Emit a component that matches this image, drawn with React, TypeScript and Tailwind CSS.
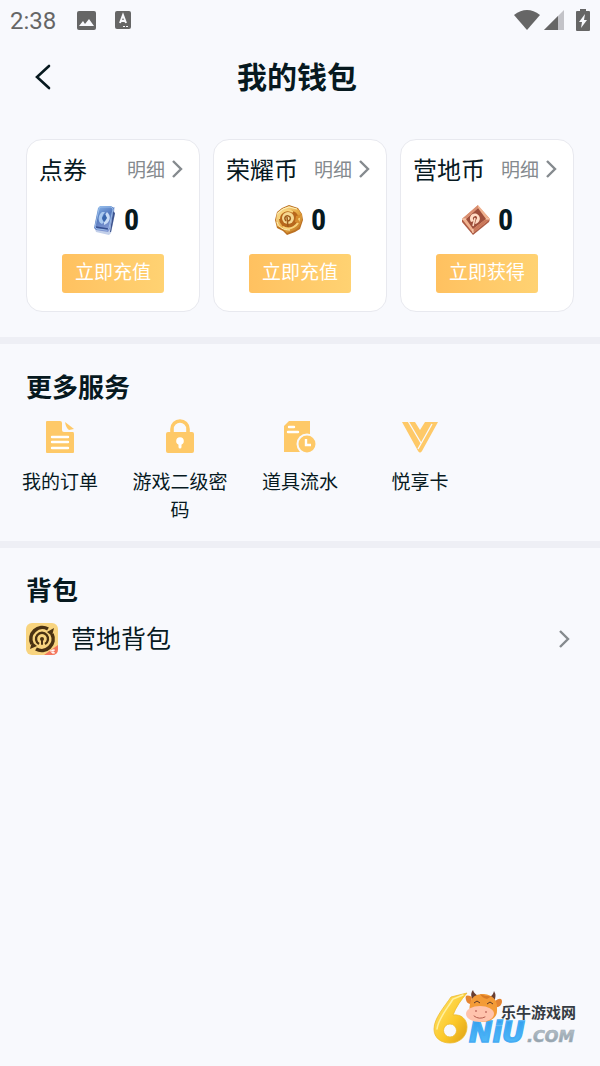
import type { ReactNode } from "react";

const TicketIcon = () => (
  <svg width="24" height="32" viewBox="0 0 24 32" aria-hidden="true">
    <defs>
      <linearGradient id="ticket" x1="0" y1="0" x2="0.4" y2="1">
        <stop offset="0" stopColor="#8fbdf0" />
        <stop offset="0.5" stopColor="#5478bd" />
        <stop offset="1" stopColor="#8399d3" />
      </linearGradient>
    </defs>
    <path d="M6 4 22 3 21 9 22 10 18 29 16 31 3 28 2 25Z" fill="#c3d0ea" />
    <path d="M18 28 22 9 20 7 17 28Z" fill="#3d538c" />
    <path d="M7 2 18 2 21 4 17 25 15 28 3 26 1 24 5 4Z" fill="url(#ticket)" />
    <path d="M7 3 18 3 20 5 16 24 14 26 4 25 2 23 6 5Z" fill="none" stroke="#a4c6ee" strokeWidth="0.8" />
    <path d="M9 8C5 11 4 18 9 20l2-2C8 15 9 12 12 8Z" fill="#a9c9ef" />
    <path d="M14 8c5 4 3 11-3 13v-3c3-2 3-5 1-7Z" fill="#c9dcf5" />
    <path d="M12 10 14 14 11 18 9 14Z" fill="#3866ad" />
    <path d="M3 23 15 25" stroke="#354f91" strokeWidth="1.5" />
  </svg>
);

const GoldCoinIcon = () => (
  <svg width="30" height="32" viewBox="0 0 30 32" aria-hidden="true">
    <defs>
      <linearGradient id="gold" x1="0" y1="0" x2="1" y2="1">
        <stop offset="0" stopColor="#fff0b5" />
        <stop offset="0.5" stopColor="#e8ad48" />
        <stop offset="1" stopColor="#bd721e" />
      </linearGradient>
    </defs>
    <path d="M15 1 24 4 28 10 29 16 26 25 21 28 13 31 9 27 3 24 1 16 3 8 8 4Z" fill="#bc7122" />
    <path d="M15 2 24 5 28 11 28 16 25 23 21 26 13 29 9 25 3 22 2 16 3 9 8 5Z" fill="url(#gold)" />
    <ellipse cx="15" cy="15" rx="10" ry="9" fill="#b7671c" />
    <path d="M5 15c0-7 8-11 14-7M25 14c0 8-9 13-16 9" fill="none" stroke="#f8d47b" strokeWidth="2" />
    <circle cx="14" cy="14" r="6" fill="#f5d891" />
    <path d="M12 17c-3-4 1-7 4-4 1 2 0 4-3 4" fill="none" stroke="#9d5b1b" strokeWidth="1.5" />
    <path d="M13 13 14 23" stroke="#9d5b1b" strokeWidth="1.5" />
    <path d="M3 18c2 6 7 8 13 8M4 9l5-4 6-2 8 2" fill="none" stroke="#fff0b8" />
    <path d="m22 12 6-2-4 5 3 5-6-2Z" fill="#d68c2e" />
  </svg>
);

const CampCoinIcon = () => (
  <svg width="30" height="32" viewBox="0 0 30 32" aria-hidden="true">
    <path d="M17 2 29 15 28 18 12 31 1 18 1 15Z" fill="#ad5c45" />
    <path d="M17 1 29 15 12 29 1 15Z" fill="#f0b28f" />
    <path d="M17 4 25 15 12 25 5 15Z" fill="#9e4f3b" />
    <path d="M17 1 17 4 5 15 1 15Z" fill="#d88e70" />
    <path d="M12 25 12 29 29 15 25 15Z" fill="#ca785a" />
    <path d="M10 18c-3-5 1-10 6-8 5 3 3 9-2 10l1-4c2-2 1-4-1-4-2 1-3 2-1 5Z" fill="#ffdcc4" />
    <path d="M14 14 12 22" stroke="#ffdcc4" strokeWidth="1.5" />
    <path d="M1 15 5 15M25 15 29 15M12 25v4" stroke="#fbd2b9" />
  </svg>
);

const OrderIcon = () => (
  <svg width="36" height="36" viewBox="0 0 36 36" aria-hidden="true">
    <path d="M4 3Q4 2 5 2H18Q20 2 20 4V11Q20 13 22 13H31Q32 13 32 15V33Q32 34 31 34H5Q4 34 4 33Z" fill="#fec968" />
    <path d="M23 3 32 10 27 11Q24 9 23 3Z" fill="#fec968" />
    <path d="M10 18H26M10 23H26M10 29H26" stroke="#fff" strokeWidth="2.4" strokeLinecap="round" />
  </svg>
);

const LockIcon = () => (
  <svg width="36" height="36" viewBox="0 0 36 36" aria-hidden="true">
    <path d="M10 15V10a8 8 0 0 1 16 0V15" fill="none" stroke="#fec968" strokeWidth="3.6" />
    <rect x="4" y="13" width="28" height="21" rx="2" fill="#fec968" />
    <circle cx="18" cy="22" r="3.8" fill="#fff" />
    <path d="M18 23V28" stroke="#fff" strokeWidth="3" strokeLinecap="round" />
  </svg>
);

const RecordIcon = () => (
  <svg width="36" height="36" viewBox="0 0 36 36" aria-hidden="true">
    <path d="M7 2H28V33H2V7Z" fill="#fec968" />
    <path d="M7 8H12M6 13H16" stroke="#fff" strokeWidth="2.4" strokeLinecap="round" />
    <circle cx="25" cy="25" r="9.500" fill="#fec968" stroke="#f8f9fd" strokeWidth="2" />
    <path d="M24 20V26H29" fill="none" stroke="#fff" strokeWidth="2.4" />
  </svg>
);

const CardIcon = () => (
  <svg width="38" height="36" viewBox="0 0 38 36" aria-hidden="true">
    <path d="M1 3H14L19 11 24 3H37L21 32Q19 35 17 32Z" fill="#fec968" />
    <path d="M7 2 20 24M31 5 17 30" fill="none" stroke="#f8f9fd" strokeWidth="1.300" />
  </svg>
);

const BagIcon = () => (
  <svg width="32" height="32" viewBox="0 0 32 32" aria-hidden="true">
    <rect width="32" height="32" rx="6" fill="#f8d47f" />
    <path d="M6 21A11.500 11.500 0 0 1 22 6M26 11A11.500 11.500 0 0 1 10 26" fill="none" stroke="#4a3213" strokeWidth="3.6" />
    <path d="M4 26 6 19 11 23ZM28 5 26 13 21 9Z" fill="#4a3213" />
    <path d="M13 21a6 6 0 1 1 6 0" fill="none" stroke="#4a3213" strokeWidth="2.4" />
    <circle cx="16" cy="16" r="2" fill="#4a3213" />
    <path d="M16 16V21" stroke="#4a3213" strokeWidth="2" strokeLinecap="round" />
    <path d="M18 32 32 22V26Q32 32 26 32Z" fill="#f4775f" />
    <path d="m24 28 5-1m-4 2 4 1m-2-4v5" stroke="#fff" />
  </svg>
);

const Chevron = ({ className }: { className: string }) => (
  <svg width="12" height="18" viewBox="0 0 12 18" className={className} aria-hidden="true">
    <path d="M2 1 10 9 2 17" fill="none" stroke="currentColor" strokeWidth="2.4" />
  </svg>
);

const wallets = [
  { name: "点券", icon: <TicketIcon />, amount: 0, action: "立即充值" },
  { name: "荣耀币", icon: <GoldCoinIcon />, amount: 0, action: "立即充值" },
  { name: "营地币", icon: <CampCoinIcon />, amount: 0, action: "立即获得" },
];

const services = [
  { name: "我的订单", icon: <OrderIcon /> },
  { name: "游戏二级密码", icon: <LockIcon /> },
  { name: "道具流水", icon: <RecordIcon /> },
  { name: "悦享卡", icon: <CardIcon /> },
];

function StatusBar() {
  return (
    <div className="flex h-10 items-center justify-between px-[10px] text-[#666]">
      <div className="flex items-center">
        <span className="w-[66px] pt-[2px] font-[Roboto,sans-serif] text-[24px] leading-8">2:38</span>
        <svg width="20" height="20" viewBox="0 0 20 20" aria-hidden="true">
          <rect x="1" y="1" width="19" height="19" rx="2" fill="currentColor" />
          <path d="M3 16 7 11 9 14 13 9 18 16Z" fill="#f8f9fd" />
        </svg>
        <svg width="16" height="18" viewBox="0 0 16 18" className="ml-[19px]" aria-hidden="true">
          <rect width="16" height="18" rx="2" fill="currentColor" />
          <path d="M5 12 8 4 11 12M6 10H10" fill="none" stroke="#f8f9fd" strokeWidth="2" />
          <path d="M8 15.500H14" stroke="#f8f9fd" strokeDasharray="2 1" />
        </svg>
      </div>
      <div className="flex items-center">
        <svg width="26" height="20" viewBox="0 0 26 20" aria-hidden="true">
          <path d="M0 5Q13-5 26 5L13 20Z" fill="currentColor" />
        </svg>
        <svg width="20" height="20" viewBox="0 0 20 20" className="ml-1" aria-hidden="true">
          <path d="M20 0V20H0Z" fill="#c3c3c8" />
          <path d="M14 6V20H0Z" fill="currentColor" />
        </svg>
        <svg width="14" height="22" viewBox="0 0 14 22" className="ml-3" aria-hidden="true">
          <path d="M4 0H10V2H13Q14 2 14 3V21Q14 22 13 22H1Q0 22 0 21V3Q0 2 1 2H4Z" fill="currentColor" />
          <path d="M9 5 3 13H6L5 19 11 11H8Z" fill="#f8f9fd" />
        </svg>
      </div>
    </div>
  );
}

function SectionTitle({ children }: { children: ReactNode }) {
  return <h2 className="px-[26px] text-[26px] font-bold leading-8">{children}</h2>;
}

function SiteLogo() {
  return (
    <svg width="146" height="60" viewBox="0 0 146 60" role="img" aria-label="乐牛游戏网 6NiU.COM">
      <defs>
        <linearGradient id="six" x1="0" y1="0" x2="1" y2="1">
          <stop offset="0" stopColor="#ffe873" />
          <stop offset="0.6" stopColor="#fcc829" />
          <stop offset="1" stopColor="#dda016" />
        </linearGradient>
        <linearGradient id="blue" x1="0" y1="0" x2="0" y2="1">
          <stop offset="0" stopColor="#2f9bed" />
          <stop offset="1" stopColor="#58c0fa" />
        </linearGradient>
        <linearGradient id="silver" x1="0" y1="0" x2="0" y2="1">
          <stop offset="0" stopColor="#bac4cc" />
          <stop offset="1" stopColor="#8999a5" />
        </linearGradient>
      </defs>
      <path
        d="M34 5 18 9C12 18 1 30 1 41c0 9 7 14 16 14 10 0 17-7 17-16 0-8-6-13-14-12 3-8 8-15 14-22ZM17 36a6.500 6.500 0 1 1 0 13 6.500 6.500 0 0 1 0-13Z"
        fill="url(#six)"
        fillRule="evenodd"
        stroke="#eebb30"
        strokeWidth="0.8"
      />
      <path d="M30 7 20 11C14 21 5 31 4 41" fill="none" stroke="#fff0a0" strokeWidth="1.500" strokeLinecap="round" />
      <text x="36" y="54" fontSize="28" fontWeight="700" fontStyle="italic" fontFamily="'DejaVu Sans', sans-serif" fill="url(#blue)" stroke="#45acf4" strokeWidth="1.600">NiU</text>
      <text x="94" y="54" fontSize="16" fontWeight="700" fontStyle="italic" fontFamily="'DejaVu Sans', sans-serif" fill="url(#silver)" stroke="#a1adb6" strokeWidth="0.6">.COM</text>
      <path d="M39 11Q37 5 40 2 41 6 46 8ZM56 9Q60 8 61 3 64 8 61 13Z" fill="#693e32" />
      <path d="M39 9Q31 5 33 12 34 16 38 16ZM62 13Q69 8 69 14 68 20 62 19Z" fill="#e48330" />
      <path d="M37 16Q39 5 51 6 65 8 64 21 65 33 49 34 34 32 37 16Z" fill="#f39b37" />
      <path d="M47 6Q54 9 59 8L54 11Q49 10 47 6Z" fill="#d87b27" />
      <ellipse cx="47" cy="26" rx="14" ry="8" fill="#ffc3ac" />
      <path d="M41 28Q46 32 52 29" fill="none" stroke="#b55e4e" strokeLinecap="round" />
      <circle cx="43" cy="23" r="1" fill="#c77567" />
      <circle cx="53" cy="24" r="1" fill="#c77567" />
      <path d="M41 15 44 13 47 15M54 16 57 14 60 16" fill="none" stroke="#5b382b" />
      <text x="68" y="30" fontSize="15" fontWeight="700" fontFamily="'Noto Sans CJK SC', sans-serif" fill="#353b42">乐牛游戏网</text>
    </svg>
  );
}

export default function App() {
  return (
    <div className="flex min-h-screen flex-col bg-[#f8f9fd] font-['Noto_Sans_CJK_SC',sans-serif] text-[#07191f]">
      <StatusBar />

      <header className="grid h-[74px] grid-cols-[1fr_auto_1fr] items-center pl-5 pr-[26px]">
        <button type="button" aria-label="返回" className="flex h-10 w-11 items-center justify-center">
          <svg width="18" height="28" viewBox="0 0 18 28" aria-hidden="true">
            <path d="M16 3 4 14 16 25" fill="none" stroke="currentColor" strokeWidth="2.6" strokeLinecap="round" />
          </svg>
        </button>
        <h1 className="pb-1 text-[30px] font-bold leading-10">我的钱包</h1>
      </header>

      <main>
        <section className="grid grid-cols-3 gap-[13px] px-[26px] pb-[25px] pt-[25px]">
          {wallets.map(({ name, icon, amount, action }) => (
            <article key={name} className="flex flex-col items-center rounded-2xl border border-[#e8e9ef] bg-white px-3 pb-[18px] pt-[11px]">
              <div className="flex w-full items-center justify-between">
                <h2 className="text-[24px] leading-9">{name}</h2>
                <a href="#" className="flex items-center gap-[6px] text-[19px] leading-7 text-[#858a8e]">
                  明细
                  <Chevron className="mr-1" />
                </a>
              </div>
              <div className="mt-[17px] flex h-8 items-center gap-[7px]">
                <span className="flex w-[30px] justify-end">{icon}</span>
                <span className="font-['Liberation_Sans_Narrow','Roboto_Condensed','Noto_Sans_CJK_SC',sans-serif] text-[30px] font-bold leading-8">{amount}</span>
              </div>
              <button type="button" className="mt-[18px] h-[39px] w-[102px] rounded-[3px] bg-linear-to-r from-[#ffc160] to-[#ffd272] pb-1 text-[19px] text-white">
                {action}
              </button>
            </article>
          ))}
        </section>

        <section className="border-y-[7px] border-[#eeeff5] pb-[18px] pt-[26px]">
          <SectionTitle>更多服务</SectionTitle>
          <nav className="mt-[17px] grid grid-cols-5">
            {services.map(({ name, icon }) => (
              <a key={name} href="#" className="flex flex-col items-center px-3 text-center text-[19px] leading-7">
                {icon}
                <span className="mt-3">{name}</span>
              </a>
            ))}
          </nav>
        </section>

        <section className="pt-[25px]">
          <SectionTitle>背包</SectionTitle>
          <a href="#" className="mt-3 flex items-center px-[26px] text-[25px] leading-10">
            <BagIcon />
            <span className="ml-[13px] flex-1 pb-1">营地背包</span>
            <Chevron className="mr-1 text-[#858a8e]" />
          </a>
        </section>
      </main>

      <footer className="mt-auto flex justify-end pb-[18px] pr-[21px]">
        <SiteLogo />
      </footer>
    </div>
  );
}
